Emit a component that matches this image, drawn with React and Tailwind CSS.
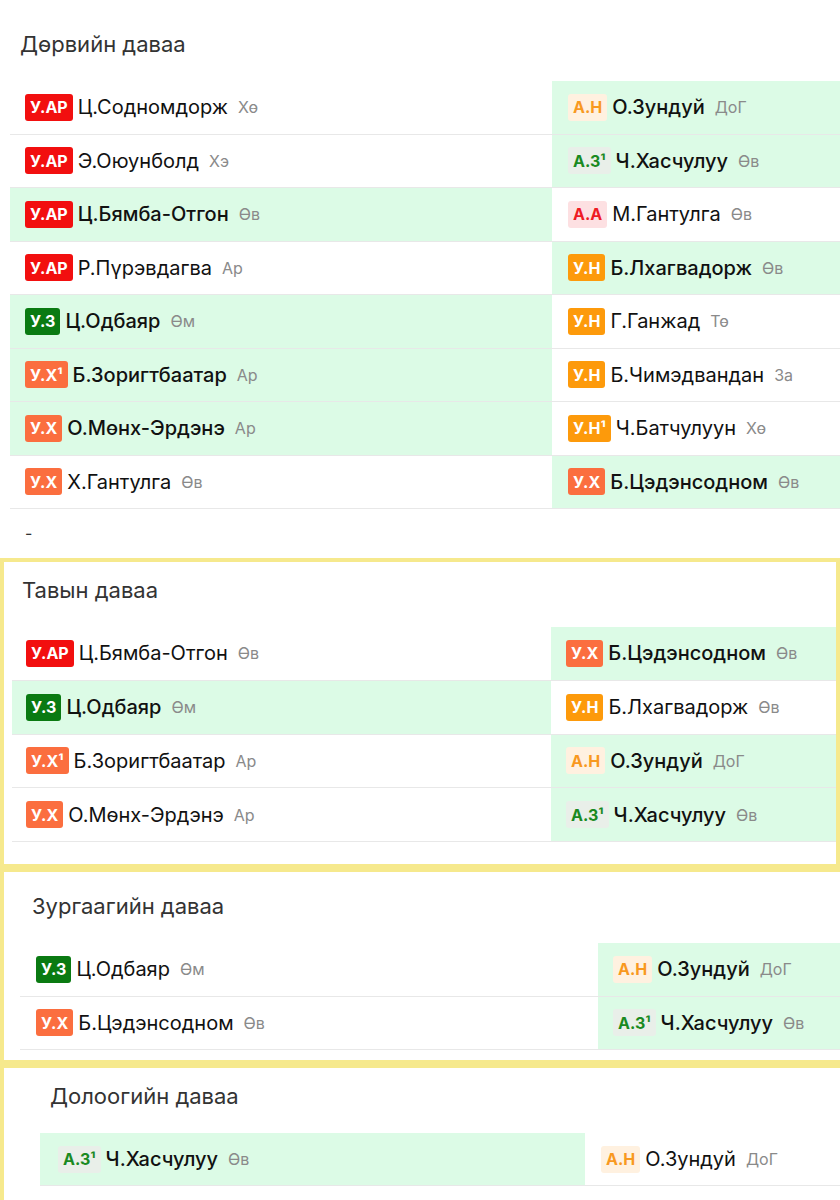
import React from 'react';

const BADGES = {
  UAR: { label: 'У.АР', cls: 'bg-[#f20f0f] text-white' },
  UZ: { label: 'У.З', cls: 'bg-[#0a7a12] text-white' },
  UX: { label: 'У.Х', cls: 'bg-[#fb6e3f] text-white' },
  UX1: { label: 'У.Х¹', cls: 'bg-[#fb6e3f] text-white' },
  UN: { label: 'У.Н', cls: 'bg-[#fd9a0b] text-white' },
  UN1: { label: 'У.Н¹', cls: 'bg-[#fd9a0b] text-white' },
  AN: { label: 'А.Н', cls: 'bg-[#fff1e0] text-[#f8991f]' },
  AZ: { label: 'А.З¹', cls: 'bg-[#e9efe9] text-[#1a8a22]' },
  AA: { label: 'А.А', cls: 'bg-[#fde0e2] text-[#ee1b24]' },
};

function Badge({ type }) {
  const b = BADGES[type];
  return (
    <span className={`inline-flex h-[27px] items-center rounded-[3px] px-[5px] text-[16px] font-bold leading-none ${b.cls}`}>
      {b.label}
    </span>
  );
}

function Cell({ p, padCls }) {
  if (!p) return <div className="border-b border-[#e8e8e8]" />;
  return (
    <div className={`flex items-center border-b border-[#e8e8e8] ${padCls} ${p.win ? 'bg-[#dcfbe6]' : 'bg-white'}`}>
      <Badge type={p.b} />
      <span className={`ml-[5px] text-[20px] text-[#111] ${p.win ? 'font-medium' : 'font-normal'}`}>{p.name}</span>
      <span className="ml-[10px] text-[16px] text-[#8a8a8a]">{p.reg}</span>
    </div>
  );
}

function Table({ rows, colsCls, leftPad, rightPad, rowCls }) {
  return (
    <div className={`grid ${colsCls}`}>
      {rows.map((r, i) => (
        <React.Fragment key={i}>
          <div className={`grid ${rowCls}`}><Cell p={r[0]} padCls={leftPad} /></div>
          <div className={`grid ${rowCls}`}><Cell p={r[1]} padCls={rightPad} /></div>
        </React.Fragment>
      ))}
    </div>
  );
}

const P = (b, name, reg, win = false) => ({ b, name, reg, win });

const round4 = [
  [P('UAR', 'Ц.Содномдорж', 'Хө'), P('AN', 'О.Зундуй', 'ДоГ', true)],
  [P('UAR', 'Э.Оюунболд', 'Хэ'), P('AZ', 'Ч.Хасчулуу', 'Өв', true)],
  [P('UAR', 'Ц.Бямба-Отгон', 'Өв', true), P('AA', 'М.Гантулга', 'Өв')],
  [P('UAR', 'Р.Пүрэвдагва', 'Ар'), P('UN', 'Б.Лхагвадорж', 'Өв', true)],
  [P('UZ', 'Ц.Одбаяр', 'Өм', true), P('UN', 'Г.Ганжад', 'Тө')],
  [P('UX1', 'Б.Зоригтбаатар', 'Ар', true), P('UN', 'Б.Чимэдвандан', 'За')],
  [P('UX', 'О.Мөнх-Эрдэнэ', 'Ар', true), P('UN1', 'Ч.Батчулуун', 'Хө')],
  [P('UX', 'Х.Гантулга', 'Өв'), P('UX', 'Б.Цэдэнсодном', 'Өв', true)],
];

const round5 = [
  [P('UAR', 'Ц.Бямба-Отгон', 'Өв'), P('UX', 'Б.Цэдэнсодном', 'Өв', true)],
  [P('UZ', 'Ц.Одбаяр', 'Өм', true), P('UN', 'Б.Лхагвадорж', 'Өв')],
  [P('UX1', 'Б.Зоригтбаатар', 'Ар'), P('AN', 'О.Зундуй', 'ДоГ', true)],
  [P('UX', 'О.Мөнх-Эрдэнэ', 'Ар'), P('AZ', 'Ч.Хасчулуу', 'Өв', true)],
];

const round6 = [
  [P('UZ', 'Ц.Одбаяр', 'Өм'), P('AN', 'О.Зундуй', 'ДоГ', true)],
  [P('UX', 'Б.Цэдэнсодном', 'Өв'), P('AZ', 'Ч.Хасчулуу', 'Өв', true)],
];

const round7 = [
  [P('AZ', 'Ч.Хасчулуу', 'Өв', true), P('AN', 'О.Зундуй', 'ДоГ')],
  [null, null],
];

export default function App() {
  return (
    <div className="h-[1200px] w-[840px] overflow-hidden bg-white font-['Inter','Liberation_Sans',sans-serif] text-[#222]">
      {/* Дөрвийн даваа */}
      <div className="pl-[10px] pt-[30px]">
        <h2 className="h-[28px] pl-[10px] text-[22px] leading-[28px] text-[#333]">Дөрвийн даваа</h2>
        <div className="mt-[23px]">
          <Table rows={round4} colsCls="grid-cols-[542px_1fr]" leftPad="pl-[15px]" rightPad="pl-[16px]" rowCls="h-[53.5px]" />
        </div>
        <div className="h-[49px] pl-[15px] pt-[14px] text-[16px] leading-[20px] text-[#333]">-</div>
      </div>

      {/* Тавын даваа */}
      <div className="border-4 border-[#f6e98d] pb-[22px] pl-[8px] pt-[14px]">
        <h2 className="h-[28px] pl-[10px] text-[22px] leading-[28px] text-[#333]">Тавын даваа</h2>
        <div className="mt-[23px]">
          <Table rows={round5} colsCls="grid-cols-[539px_1fr]" leftPad="pl-[14px]" rightPad="pl-[15px]" rowCls="h-[53.75px]" />
        </div>
      </div>

      {/* Зургаагийн даваа */}
      <div className="border-4 border-r-0 border-[#f6e98d] pb-[10px] pl-[16px] pt-[20px]">
        <h2 className="h-[28px] pl-[12px] text-[22px] leading-[28px] text-[#333]">Зургаагийн даваа</h2>
        <div className="mt-[23px]">
          <Table rows={round6} colsCls="grid-cols-[578px_1fr]" leftPad="pl-[16px]" rightPad="pl-[15px]" rowCls="h-[53.5px]" />
        </div>
      </div>

      {/* Долоогийн даваа */}
      <div className="border-4 border-r-0 border-b-0 border-[#f6e98d] pl-[36px] pt-[14px]">
        <h2 className="h-[28px] pl-[10px] text-[22px] leading-[28px] text-[#333]">Долоогийн даваа</h2>
        <div className="mt-[23px]">
          <Table rows={round7} colsCls="grid-cols-[545px_1fr]" leftPad="pl-[18px]" rightPad="pl-[16px]" rowCls="h-[53px]" />
        </div>
      </div>
    </div>
  );
}
